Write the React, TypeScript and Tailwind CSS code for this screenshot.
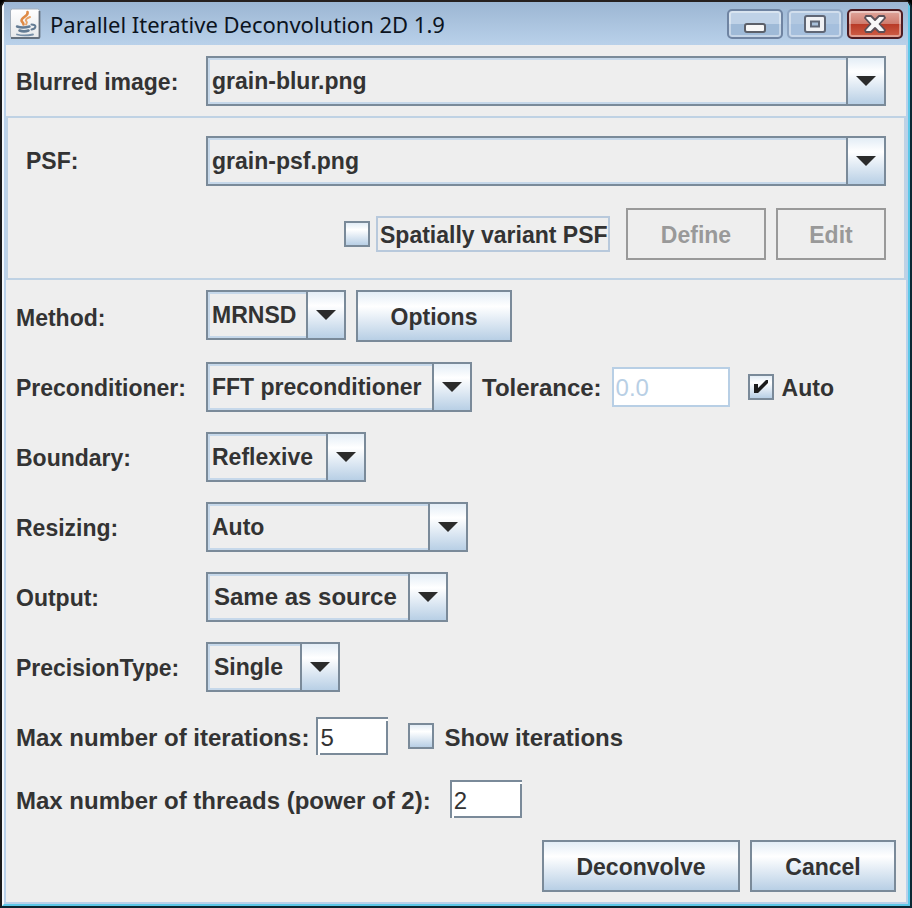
import type { ReactNode } from "react";

const face = "bg-linear-to-b from-[#e3edf6] via-white via-30% to-[#b8cfe5]";

type ComboProps = {
  id: string;
  value: string;
  width: string;
  text?: string;
};

function Combo({ id, value, width, text = "pl-[2px] text-[23px]" }: ComboProps) {
  return (
    <div className={`relative h-[50px] border-2 border-[#7a8a99] ${width}`}>
      <select
        id={id}
        defaultValue={value}
        className={`block h-full w-full appearance-none border-2 border-[#c6d8ea] bg-[#eeeeee] pr-[38px] font-bold text-[#333333] outline-none ${text}`}
      >
        <option>{value}</option>
      </select>
      <span
        className={`pointer-events-none absolute inset-y-0 right-0 flex w-[38px] items-center justify-center border-l-2 border-[#7a8a99] ${face}`}
      >
        <svg width="20" height="10" viewBox="0 0 20 10" aria-hidden="true">
          <path d="M0 0H20L10 10Z" fill="#2b2b2b" />
        </svg>
      </span>
    </div>
  );
}

function PushButton({ children, width, disabled = false }: { children: ReactNode; width: string; disabled?: boolean }) {
  const look = disabled ? "border-[#999999] bg-[#eeeeee] text-[#999999]" : `border-[#7a8a99] text-[#333333] ${face}`;
  return (
    <button type="button" disabled={disabled} className={`h-[52px] border-2 pt-[2px] text-[23px] font-bold ${look} ${width}`}>
      {children}
    </button>
  );
}

function Tick({ id, checked = false }: { id: string; checked?: boolean }) {
  return (
    <span className="relative block size-[26px] shrink-0">
      <input
        id={id}
        type="checkbox"
        defaultChecked={checked}
        className="peer block size-[26px] appearance-none border-2 border-[#7a8a99] bg-linear-to-b from-[#e3edf6] via-white via-30% to-[#b8cfe5]"
      />
      <svg
        viewBox="0 0 26 26"
        className="pointer-events-none absolute inset-0 hidden size-[26px] peer-checked:block"
        aria-hidden="true"
      >
        <path d="M6 10H10V14L18 6H20V9L10 19H6Z" fill="#1c1c1c" />
      </svg>
    </span>
  );
}

function NumberField({ id, value }: { id: string; value: string }) {
  return (
    <span className="relative block h-[38px] w-[72px]">
      <input
        id={id}
        defaultValue={value}
        className="block h-full w-full border-2 border-[#7a8a99] bg-white pl-[2px] pt-[4px] text-[24px] text-[#333333] outline-none"
      />
      <span className="absolute top-[2px] right-0 size-[2px] bg-white" />
      <span className="absolute bottom-0 left-[2px] size-[2px] bg-white" />
    </span>
  );
}

function Row({ id, label, children }: { id: string; label: string; children: ReactNode }) {
  return (
    <div className="flex h-[50px] items-center">
      <label htmlFor={id} className="w-[190px] shrink-0 pt-[2px]">
        {label}
      </label>
      {children}
    </div>
  );
}

function JavaIcon() {
  return (
    <svg width="32" height="32" viewBox="0 0 32 32" aria-hidden="true">
      <defs>
        <linearGradient id="tile" x1="0" y1="0" x2="0" y2="1">
          <stop offset="0" stopColor="#ffffff" />
          <stop offset="1" stopColor="#e6e8ea" />
        </linearGradient>
      </defs>
      <rect x="1.500" y="1" width="29" height="29" rx="2" fill="url(#tile)" stroke="#a3afbc" />
      <path d="M2 30H29.500Q30.500 30 30.500 29V3" fill="none" stroke="#65717e" strokeWidth="1.800" />
      <g fill="none" strokeLinecap="round">
        <path d="M18.500 4C20 8 12.500 9 12.500 12.500C12.500 14 14.500 14.500 14.500 16.500" stroke="#df8a45" strokeWidth="2.600" />
        <path d="M21 9C17 10.500 16 12 17.500 13.500C18.500 14.500 17.500 15.500 17 16.500" stroke="#e8a468" strokeWidth="2" />
        <path d="M8 18.500C11 19.500 17 19.500 20.500 18.500" stroke="#647c94" strokeWidth="2.400" />
        <path d="M10.500 22.500C13 23.500 17 23.500 19.500 22.500" stroke="#647c94" strokeWidth="2.600" />
        <path d="M22.500 16.500C28 16.500 27.500 20.500 22.500 21.500" stroke="#647c94" strokeWidth="2" />
        <path d="M8 26.500C12 27.500 19 27.500 24 26.500" stroke="#7890a8" strokeWidth="1.800" />
      </g>
    </svg>
  );
}

const caption =
  "flex h-[30px] w-[56px] items-center justify-center rounded-[5px] border-2 shadow-[inset_0_0_0_2px_rgba(255,255,255,0.4)]";

function TitleBar() {
  return (
    <header className="flex h-[43px] shrink-0 items-center bg-linear-to-b from-[#9cb6d3] to-[#b9d1ea] pr-[5px] pl-[5px]">
      <JavaIcon />
      <h1 className="ml-[9px] flex-1 font-['Noto_Sans',sans-serif] text-[22px] leading-[30px] whitespace-nowrap text-[#0b1320]">
        Parallel Iterative Deconvolution 2D 1.9
      </h1>
      <div className="flex gap-[4px] pt-[1px]">
        <button
          type="button"
          aria-label="Minimize"
          className={`${caption} border-[#6f84a2] bg-linear-to-b from-[#bfd2e7] from-50% to-[#9fbad7] to-50%`}
        >
          <svg width="22" height="26" viewBox="0 0 22 26" aria-hidden="true">
            <rect x="1" y="13" width="20" height="8" rx="2" fill="#f8f8f8" stroke="#5c6069" strokeWidth="2" />
          </svg>
        </button>
        <button
          type="button"
          aria-label="Maximize"
          className={`${caption} border-[#8fa6c3] bg-linear-to-b from-[#b2c8e1] from-50% to-[#a5bfdd] to-50%`}
        >
          <svg width="22" height="18" viewBox="0 0 22 18" aria-hidden="true">
            <rect x="1" y="1" width="20" height="16" rx="2" fill="#f0f1f4" stroke="#5f6675" strokeWidth="2" />
            <rect x="7" y="6.500" width="8" height="5" fill="#a9c0da" stroke="#5f6675" strokeWidth="2" />
          </svg>
        </button>
        <button
          type="button"
          aria-label="Close"
          className={`${caption} border-[#4d1c22] bg-[linear-gradient(to_bottom,#dfa79d_0%,#cf7a6c_50%,#b83a26_50%,#cf6048_100%)]`}
        >
          <svg width="24" height="20" viewBox="0 0 24 20" aria-hidden="true">
            <path
              d="M3 2H8L12 6L16 2H21L22 4L16.500 10L22 16L21 18H16L12 14L8 18H3L2 16L7.500 10L2 4Z"
              fill="#f8f8f8"
              stroke="#5a5058"
              strokeWidth="1.800"
              strokeLinejoin="round"
            />
          </svg>
        </button>
      </div>
    </header>
  );
}

export default function App() {
  return (
    <div className="flex min-h-screen bg-black font-['Liberation_Sans',Arial,sans-serif] text-[#333333]">
      <div className="flex flex-1 flex-col rounded-t-[8px] border-t-2 border-r-2 border-b-2 border-l-2 border-t-[#26201f] border-r-[#0c2733] border-b-[#0c2733] border-l-[#1a1a1a] bg-[#eeeeee]">
        <div className="flex flex-1 flex-col rounded-t-[6px] border-r-2 border-b-2 border-l-2 border-r-[#5cc8e8] border-b-[#5cc8e8] border-l-[#f4f8fc] bg-[#b9d1ea]">
          <TitleBar />
          <main className="mr-[2px] mb-[2px] ml-[2px] flex flex-1 flex-col bg-[#eeeeee] text-[23px] leading-[28px] font-bold">
            <div className="mt-[11px] mr-[20px] ml-[10px]">
              <Row id="image" label="Blurred image:">
                <Combo id="image" value="grain-blur.png" width="flex-1" />
              </Row>
            </div>

            <section className="mt-[10px] border-2 border-[#bfd2e4] pt-[18px] pr-[18px] pb-[18px] pl-[18px]">
              <div className="flex items-center">
                <label htmlFor="psf" className="w-[180px] shrink-0">
                  PSF:
                </label>
                <Combo id="psf" value="grain-psf.png" width="flex-1" />
              </div>
              <div className="mt-[22px] flex items-center justify-end">
                <Tick id="variant" />
                <label
                  htmlFor="variant"
                  className="ml-[6px] h-[36px] w-[234px] border-2 border-[#b8c9dc] pt-[3px] pl-[2px] whitespace-nowrap"
                >
                  Spatially variant PSF
                </label>
                <div className="ml-[16px] flex gap-[10px]">
                  <PushButton width="w-[140px]" disabled>
                    Define
                  </PushButton>
                  <PushButton width="w-[110px]" disabled>
                    Edit
                  </PushButton>
                </div>
              </div>
            </section>

            <div className="mt-[10px] ml-[10px] flex flex-col gap-[20px]">
              <div className="flex h-[52px] items-start">
                <label htmlFor="method" className="w-[190px] shrink-0 pt-[14px]">
                  Method:
                </label>
                <Combo id="method" value="MRNSD" width="w-[140px]" />
                <div className="ml-[10px]">
                  <PushButton width="w-[156px]">Options</PushButton>
                </div>
              </div>
              <Row id="precond" label="Preconditioner:">
                <Combo id="precond" value="FFT preconditioner" width="w-[266px]" />
                <label htmlFor="tolerance" className="ml-[10px] pt-[2px] text-[24px]">
                  Tolerance:
                </label>
                <input
                  id="tolerance"
                  defaultValue="0.0"
                  disabled
                  className="ml-[10px] h-[40px] w-[118px] border-2 border-[#b8cfe5] bg-white pl-[2px] pt-[2px] text-[24px] font-normal text-[#b8cfe5]"
                />
                <div className="ml-[18px] flex items-center gap-[8px]">
                  <Tick id="auto" checked />
                  <label htmlFor="auto" className="pt-[2px]">
                    Auto
                  </label>
                </div>
              </Row>
              <Row id="boundary" label="Boundary:">
                <Combo id="boundary" value="Reflexive" width="w-[160px]" />
              </Row>
              <Row id="resizing" label="Resizing:">
                <Combo id="resizing" value="Auto" width="w-[262px]" />
              </Row>
              <Row id="output" label="Output:">
                <Combo id="output" value="Same as source" width="w-[242px]" text="pl-[4px] text-[24px]" />
              </Row>
              <Row id="precision" label="PrecisionType:">
                <Combo id="precision" value="Single" width="w-[134px]" text="pl-[4px] text-[23px]" />
              </Row>
            </div>

            <div className="mt-[25px] ml-[10px] flex items-center text-[24px] font-normal">
              <label htmlFor="iterations" className="pt-[4px] font-bold">
                Max number of iterations:
              </label>
              <div className="ml-[7px]">
                <NumberField id="iterations" value="5" />
              </div>
              <div className="ml-[20px] flex items-center gap-[10px]">
                <Tick id="show" />
                <label htmlFor="show" className="pt-[4px] font-bold">
                  Show iterations
                </label>
              </div>
            </div>
            <div className="mt-[25px] ml-[10px] flex items-center text-[24px] font-normal">
              <label htmlFor="threads" className="pt-[4px] font-bold">
                Max number of threads (power of 2):
              </label>
              <div className="ml-[19px]">
                <NumberField id="threads" value="2" />
              </div>
            </div>

            <div className="mt-[22px] mr-[10px] mb-[10px] flex justify-end gap-[10px]">
              <PushButton width="w-[198px]">Deconvolve</PushButton>
              <PushButton width="w-[146px]">Cancel</PushButton>
            </div>
          </main>
        </div>
      </div>
    </div>
  );
}
